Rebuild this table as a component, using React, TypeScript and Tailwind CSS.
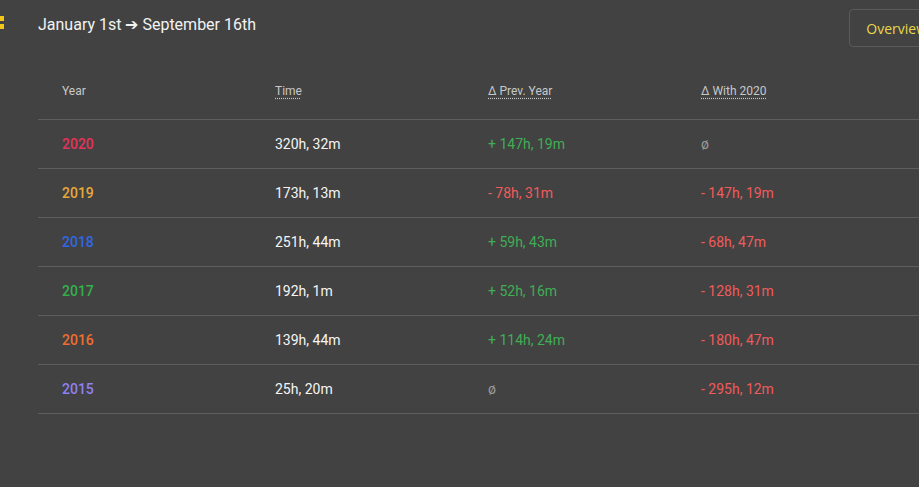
import React from "react";

const rows = [
  { year: "2020", yc: "text-[#e5335b]", time: "320h, 32m", prev: { t: "+ 147h, 19m", c: "g" }, w: { t: "ø", c: "n" } },
  { year: "2019", yc: "text-[#e8a93a]", time: "173h, 13m", prev: { t: "- 78h, 31m", c: "r" }, w: { t: "- 147h, 19m", c: "r" } },
  { year: "2018", yc: "text-[#3068e6]", time: "251h, 44m", prev: { t: "+ 59h, 43m", c: "g" }, w: { t: "- 68h, 47m", c: "r" } },
  { year: "2017", yc: "text-[#34b04a]", time: "192h, 1m", prev: { t: "+ 52h, 16m", c: "g" }, w: { t: "- 128h, 31m", c: "r" } },
  { year: "2016", yc: "text-[#ee6e30]", time: "139h, 44m", prev: { t: "+ 114h, 24m", c: "g" }, w: { t: "- 180h, 47m", c: "r" } },
  { year: "2015", yc: "text-[#8f80f5]", time: "25h, 20m", prev: { t: "ø", c: "n" }, w: { t: "- 295h, 12m", c: "r" } },
];

const cls = (c: string) =>
  c === "g" ? "text-[#3fae55]" : c === "r" ? "text-[#f05b5b]" : "text-[#9a9a9a]";

export default function App() {
  return (
    <div className="w-[919px] h-[487px] overflow-hidden bg-[#424242] relative" style={{ fontFamily: "Roboto, sans-serif" }}>
      <div className="absolute left-0 top-[16px] flex flex-col gap-[3px]">
        <div className="w-[4px] h-[5px] bg-[#f5c518]" />
        <div className="w-[4px] h-[5px] bg-[#f5c518]" />
      </div>
      <div className="flex items-start justify-between pl-[38px] pt-[13px]">
        <div className="text-[16px] leading-[22px] text-[#f2f2f2] pt-[1px]">January 1st ➔ September 16th</div>
        <div className="mt-[-4px] mr-[-25px] h-[38px] pl-[16px] pr-[16px] flex items-center border border-[#5a5a5a] rounded-[4px] text-[14px] text-[#e9d84a]" style={{ fontFamily: "'Open Sans', sans-serif" }}>
          Overview
        </div>
      </div>
      <div className="ml-[38px] mt-[19px] w-[900px]">
        <div className="flex h-[54px] pb-[3px] items-center border-b border-[#5e5e5e] text-[12px] text-[#c8c8c8]">
          <div className="w-[213px] pl-[24px]">Year</div>
          <div className="w-[213px] pl-[24px]"><span className="underline decoration-dotted underline-offset-[3px]">Time</span></div>
          <div className="w-[213px] pl-[24px]"><span className="underline decoration-dotted underline-offset-[3px]">Δ Prev. Year</span></div>
          <div className="w-[213px] pl-[24px]"><span className="underline decoration-dotted underline-offset-[3px]">Δ With 2020</span></div>
        </div>
        {rows.map((r) => (
          <div key={r.year} className="flex h-[49px] items-center border-b border-[#5e5e5e] text-[14px]">
            <div className={`w-[213px] pl-[24px] font-medium ${r.yc}`}>{r.year}</div>
            <div className="w-[213px] pl-[24px] text-[#f5f5f5]">{r.time}</div>
            <div className={`w-[213px] pl-[24px] ${cls(r.prev.c)}`}>{r.prev.t}</div>
            <div className={`w-[213px] pl-[24px] ${cls(r.w.c)}`}>{r.w.t}</div>
          </div>
        ))}
      </div>
    </div>
  );
}
